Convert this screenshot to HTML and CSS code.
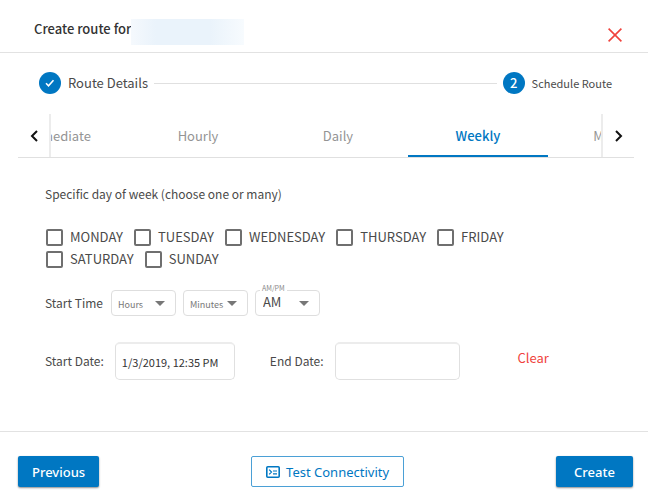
FILE: index.html
```html
<!DOCTYPE html>
<html lang="en">
<head>
<meta charset="utf-8">
<meta name="viewport" content="width=device-width, initial-scale=1">
<title>Create route</title>
<link rel="stylesheet" href="styles.css">
</head>
<body>
<main class="dialog">
  <header class="dialog-header">
    <h1 class="title">Create route for</h1>
    <span class="route-name"></span>
    <button class="close" type="button" aria-label="Close">
      <svg width="14" height="14" viewBox="0 0 14 14"><path d="M.6.6l12.8 12.8M13.4.6L.6 13.4" fill="none" stroke="currentColor" stroke-width="1.6"/></svg>
    </button>
  </header>

  <ol class="stepper">
    <li class="step">
      <span class="step-badge"><svg width="12" height="12" viewBox="0 0 12 12"><path d="M2 6.3l2.5 2.5 5-5.6" fill="none" stroke="currentColor" stroke-width="1.6"/></svg></span>
      <span class="step-label step-label-done">Route Details</span>
    </li>
    <li class="step-line" role="presentation"></li>
    <li class="step">
      <span class="step-badge">2</span>
      <span class="step-label">Schedule Route</span>
    </li>
  </ol>

  <nav class="tabs">
    <button class="pager pager-before" type="button" aria-label="Previous tabs">
      <svg width="8" height="12" viewBox="0 0 8 12"><path d="M7 1L2 6l5 5" fill="none" stroke="currentColor" stroke-width="2"/></svg>
    </button>
    <div class="tab-view">
      <div class="tab-list" role="tablist">
        <button class="tab" type="button" role="tab">Immediate</button>
        <button class="tab" type="button" role="tab">Hourly</button>
        <button class="tab" type="button" role="tab">Daily</button>
        <button class="tab tab-active" type="button" role="tab" aria-selected="true">Weekly</button>
        <button class="tab" type="button" role="tab">Monthly</button>
      </div>
    </div>
    <button class="pager pager-after" type="button" aria-label="Next tabs">
      <svg width="8" height="12" viewBox="0 0 8 12"><path d="M1 1l5 5-5 5" fill="none" stroke="currentColor" stroke-width="2"/></svg>
    </button>
  </nav>

  <form class="schedule">
    <fieldset class="days">
      <legend class="days-title">Specific day of week (choose one or many)</legend>
      <div class="day-list">
        <label class="day"><input class="box" type="checkbox">MONDAY</label>
        <label class="day"><input class="box" type="checkbox">TUESDAY</label>
        <label class="day"><input class="box" type="checkbox">WEDNESDAY</label>
        <label class="day"><input class="box" type="checkbox">THURSDAY</label>
        <label class="day"><input class="box" type="checkbox">FRIDAY</label>
        <label class="day"><input class="box" type="checkbox">SATURDAY</label>
        <label class="day"><input class="box" type="checkbox">SUNDAY</label>
      </div>
    </fieldset>

    <div class="time-row">
      <label class="row-label" for="hours">Start Time</label>
      <div class="picker">
        <select class="select select-empty" id="hours"><option>Hours</option></select>
        <svg class="caret" width="10" height="5" viewBox="0 0 10 5"><path d="M0 0h10L5 5z" fill="currentColor"/></svg>
      </div>
      <div class="picker">
        <select class="select select-empty" id="minutes" aria-label="Minutes"><option>Minutes</option></select>
        <svg class="caret" width="10" height="5" viewBox="0 0 10 5"><path d="M0 0h10L5 5z" fill="currentColor"/></svg>
      </div>
      <div class="picker">
        <select class="select" id="period"><option>AM</option><option>PM</option></select>
        <label class="float-label" for="period">AM/PM</label>
        <svg class="caret" width="10" height="5" viewBox="0 0 10 5"><path d="M0 0h10L5 5z" fill="currentColor"/></svg>
      </div>
    </div>

    <div class="date-row">
      <label class="row-label" for="start">Start Date:</label>
      <input class="date date-start" id="start" type="text" value="1/3/2019, 12:35 PM">
      <label class="row-label" for="end">End Date:</label>
      <input class="date date-end" id="end" type="text">
      <button class="clear" type="button">Clear</button>
    </div>
  </form>

  <footer class="actions">
    <button class="btn btn-primary" type="button">Previous</button>
    <button class="btn btn-outline" type="button">
      <svg width="14" height="12" viewBox="0 0 14 12"><rect x=".8" y=".8" width="12.4" height="10.4" rx="1" fill="none" stroke="currentColor" stroke-width="1.6"/><path d="M3.2 3.6l2.3 2.4-2.3 2.4M7 5h4M7 7.8h4" fill="none" stroke="currentColor" stroke-width="1.2"/></svg>
      Test Connectivity
    </button>
    <button class="btn btn-primary" type="button">Create</button>
  </footer>
</main>
</body>
</html>
```
FILE: styles.css
```css
* {
  box-sizing: border-box;
}

body {
  margin: 0;
  background: #fff;
  color: #4a4a4a;
  font: 12px/20px "Noto Sans CJK SC", "Noto Sans", sans-serif;
}

button,
input,
select {
  margin: 0;
  font: inherit;
  color: inherit;
}

button {
  padding: 0;
  border: 0;
  background: none;
  cursor: pointer;
}

svg {
  display: block;
  flex: none;
}

.dialog-header {
  display: flex;
  align-items: flex-end;
  height: 53px;
  padding: 0 24px 7px 34px;
  border-bottom: 1px solid #e2e2e2;
}

.title {
  margin: 0 0 6px;
  color: #333;
  font-size: 13px;
  line-height: 20px;
  font-weight: 500;
}

.route-name {
  width: 113px;
  height: 26px;
  background: linear-gradient(90deg, #f5f9fd, #eaf3fb 22%, #eaf3fb 70%, #f7fbfe);
}

.close {
  display: grid;
  place-items: center;
  width: 18px;
  height: 20px;
  margin-left: auto;
  color: #f0423c;
}

.stepper {
  display: flex;
  align-items: center;
  margin: 0;
  padding: 19px 36px 20px 39px;
  list-style: none;
}

.step {
  display: flex;
  align-items: center;
  gap: 7px;
}

.step-badge {
  display: grid;
  place-items: center;
  width: 22px;
  height: 22px;
  border-radius: 50%;
  background: #0077c2;
  color: #fff;
  font-size: 13px;
  font-weight: 500;
}

.step-label {
  font-size: 11px;
}

.step-label-done {
  font-size: 13px;
}

.step-line {
  flex: 1;
  height: 1px;
  margin: 0 6px;
  background: #e0e0e0;
}

.tabs {
  display: flex;
  height: 44px;
  margin: 0 14px 0 18px;
  border-bottom: 1px solid #e0e0e0;
}

.pager {
  display: grid;
  place-items: center;
  flex: 0 0 33px;
  color: #111;
}

.pager-before {
  border-right: 2px solid #ececec;
}

.pager-after {
  border-left: 2px solid #ececec;
}

.tab-view {
  flex: 1;
  overflow: hidden;
}

.tab-list {
  display: flex;
  height: 100%;
  margin-left: -63px;
}

.tab {
  flex: 0 0 140px;
  padding-top: 2px;
  border-bottom: 2px solid transparent;
  color: #949494;
  font-size: 13px;
}

.tab-active {
  border-color: #0077c2;
  color: #0077c2;
  font-weight: 500;
}

.schedule {
  padding: 26px 45px 51px;
}

.days {
  margin: 0;
  padding: 0;
  border: 0;
}

.days-title {
  padding: 0;
}

.day-list {
  display: flex;
  flex-wrap: wrap;
  gap: 0 11px;
  max-width: 500px;
  padding: 22px 0 0 1px;
  font-size: 13px;
}

.day {
  display: flex;
  align-items: center;
  gap: 7px;
  height: 22px;
}

.box {
  width: 17px;
  height: 17px;
  border: 2px solid #6f6f6f;
  border-radius: 2px;
  appearance: none;
}

.time-row {
  display: flex;
  align-items: center;
  gap: 7px;
  padding-top: 20px;
}

.picker {
  position: relative;
}

.row-label {
  padding-right: 1px;
}

.select {
  display: block;
  width: 65px;
  height: 26px;
  padding: 0 0 2px 7px;
  border: 1px solid #dedede;
  border-radius: 4px;
  background: #fff;
  font-size: 13px;
  appearance: none;
}

.select-empty {
  padding: 4px 0 0 6px;
  color: #777;
  font-size: 9px;
}

.caret {
  position: absolute;
  top: 11px;
  right: 11px;
  color: #777;
  pointer-events: none;
}

.float-label {
  position: absolute;
  top: -6px;
  left: 5px;
  padding: 0 2px;
  background: #fff;
  color: #888;
  font-size: 7px;
  line-height: 8px;
}

.date-row {
  display: flex;
  align-items: center;
  gap: 10px;
  padding-top: 26px;
}

.date {
  height: 38px;
  padding: 0 6px;
  border: 1px solid #e0e0e0;
  border-top: 2px solid #ececec;
  border-radius: 5px;
  background: #fff;
  color: #333;
  font-size: 11px;
}

.date-start {
  width: 120px;
  margin-right: 25px;
}

.date-end {
  width: 125px;
}

.clear {
  margin: 0 0 6px 48px;
  color: #f0423c;
  font-size: 13px;
}

.actions {
  display: flex;
  align-items: center;
  justify-content: space-between;
  padding: 24px 15px 14px 18px;
  border-top: 1px solid #e2e2e2;
}

.btn {
  display: flex;
  align-items: center;
  justify-content: center;
  gap: 6px;
  height: 31px;
  padding: 0 14px;
  border-radius: 2px;
  font-family: "Noto Sans", sans-serif;
  font-size: 13px;
  font-weight: 500;
}

.btn-primary {
  min-width: 77px;
  background: #0077c2;
  box-shadow: 0 1px 2px rgba(0, 0, 0, 0.45);
  color: #fff;
}

.btn-outline {
  border: 1px solid #4ba0d6;
  color: #0077c2;
  font-weight: 400;
}
```
